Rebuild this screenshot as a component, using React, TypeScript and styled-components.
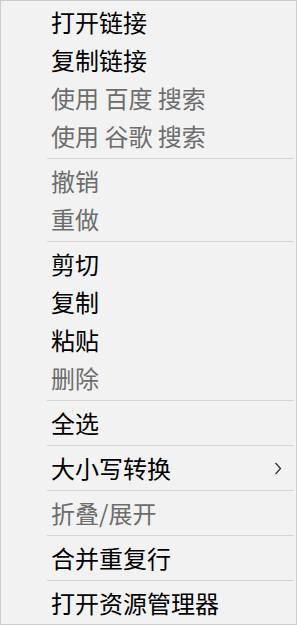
import React from "react";
import styled, { createGlobalStyle } from "styled-components";

const Global = createGlobalStyle`
  html, body { margin: 0; padding: 0; background: #ffffff; }
  * { box-sizing: border-box; }
`;

const Menu = styled.div`
  width: 297px;
  height: 625px;
  border: 1px solid #cccccc;
  background: #f2f2f2;
  padding: 2px 0;
  display: flex;
  flex-direction: column;
  font-family: "Noto Sans CJK SC", "Noto Sans", sans-serif;
  font-size: 24px;
`;

const Item = styled.div<{ $disabled?: boolean }>`
  height: 38px;
  display: flex;
  align-items: center;
  justify-content: space-between;
  padding: 0 14px 0 50px;
  color: ${(p) => (p.$disabled ? "#6d6d6d" : "#000000")};
  line-height: 38px;
  white-space: pre;
`;

const Separator = styled.div`
  height: 1px;
  margin: 3px 2px 3px 46px;
  background: #d5d5d5;
`;

const Chevron = styled.svg`
  width: 8px;
  height: 13px;
  display: block;
`;

type Entry = { label: string; disabled?: boolean; sub?: boolean } | "sep";

const entries: Entry[] = [
  { label: "打开链接" },
  { label: "复制链接" },
  { label: "使用 百度 搜索", disabled: true },
  { label: "使用 谷歌 搜索", disabled: true },
  "sep",
  { label: "撤销", disabled: true },
  { label: "重做", disabled: true },
  "sep",
  { label: "剪切" },
  { label: "复制" },
  { label: "粘贴" },
  { label: "删除", disabled: true },
  "sep",
  { label: "全选" },
  "sep",
  { label: "大小写转换", sub: true },
  "sep",
  { label: "折叠/展开", disabled: true },
  "sep",
  { label: "合并重复行" },
  "sep",
  { label: "打开资源管理器" },
];

export default function App() {
  return (
    <>
      <Global />
      <Menu>
        {entries.map((e, i) =>
          e === "sep" ? (
            <Separator key={i} />
          ) : (
            <Item key={i} $disabled={e.disabled}>
              <span>{e.label}</span>
              {e.sub && (
                <Chevron viewBox="0 0 8 13">
                  <path d="M1.5 1 L6.5 6.5 L1.5 12" fill="none" stroke="#333" strokeWidth="1.3" />
                </Chevron>
              )}
            </Item>
          )
        )}
      </Menu>
    </>
  );
}
